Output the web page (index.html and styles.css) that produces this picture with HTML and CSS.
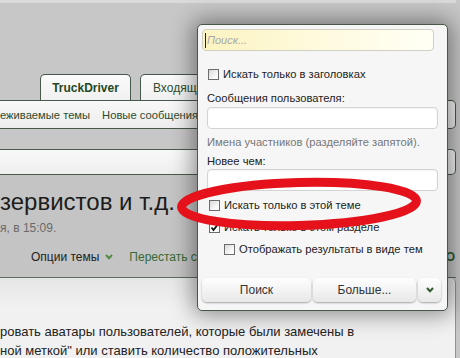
FILE: index.html
```html
<!DOCTYPE html>
<html lang="ru">
<head>
<meta charset="utf-8">
<link rel="stylesheet" href="styles.css">
</head>
<body>
<div class="page">
  <div class="topstrip"></div>
  <div class="tabs">
    <div class="tab active">TruckDriver</div>
    <div class="tab other">Входящие</div>
  </div>
  <div class="navbar">
    <span class="navlink">еживаемые темы</span>
    <span class="navlink">Новые сообщения</span>
  </div>
  <div class="crumbs"></div>
  <div class="titlebar">
    <h1 class="title">зервистов и т.д.</h1>
    <p class="meta">я, в 15:09.</p>
    <div class="options">
      <span class="opt">Опции темы</span>
      <svg class="chev-green" width="8" height="6" viewBox="0 0 8 6"><path d="M1 1 L4 4.2 L7 1" fill="none" stroke="#4f8a40" stroke-width="2"/></svg>
      <span class="link">Перестать следить</span>
      <span class="link edge">О</span>
    </div>
  </div>
  <div class="content">
    <p class="text">ровать аватары пользователей, которые были замечены в<br>ной меткой" или ставить количество положительных</p>
  </div>
</div>

<div class="popup">
  <div class="searchbox"><span class="caret"></span><span class="placeholder">Поиск...</span></div>
  <label class="row first"><span class="cb"></span>Искать только в заголовках</label>
  <div class="label">Сообщения пользователя:</div>
  <div class="field"></div>
  <div class="hint">Имена участников (разделяйте запятой).</div>
  <div class="label label2">Новее чем:</div>
  <div class="field field2"></div>
  <label class="row rows"><span class="cb"></span>Искать только в этой теме</label>
  <label class="row plain"><span class="cb checked"><svg width="9" height="9" viewBox="0 0 9 9"><path d="M1.5 4.5 L3.5 7 L7.8 1.5" fill="none" stroke="#111" stroke-width="1.8"/></svg></span>Искать только в этом разделе</label>
  <label class="row indent"><span class="cb"></span>Отображать результаты в виде тем</label>
  <div class="buttons">
    <span class="btn btn-search">Поиск</span>
    <span class="btn btn-more">Больше...</span>
    <span class="btn btn-toggle"><svg width="8" height="6" viewBox="0 0 8 6"><path d="M1 1 L4 4.2 L7 1" fill="none" stroke="#2f5a2f" stroke-width="2"/></svg></span>
  </div>
</div>

<svg class="mark" width="460" height="358" viewBox="0 0 460 358">
  <ellipse cx="299" cy="204" rx="117.5" ry="21.5" fill="none" stroke="#e5121b" stroke-width="9" transform="rotate(-1.5 299 204)"/>
</svg>
</body>
</html>
```

FILE: styles.css
```css
body {
  margin: 0;
  width: 460px;
  height: 358px;
  overflow: hidden;
  position: relative;
  background: #c7c7c7;
  font-family: "Liberation Sans", Arial, sans-serif;
}

.page {
  width: 456px;
}

.topstrip {
  height: 3px;
  background: #dadada;
}

.tabs {
  display: flex;
  gap: 9px;
  margin-top: 71px;
  height: 26px;
}

.tab {
  box-sizing: border-box;
  height: 26px;
  border: 1px solid #48584a;
  border-bottom: 0;
  border-radius: 5px 5px 0 0;
  background: linear-gradient(#fbfbfb, #f0f0f0);
  font-size: 12px;
  line-height: 26px;
  color: #2e4e2e;
}

.tab.active {
  width: 91px;
  margin-left: 40px;
  text-align: center;
  font-weight: bold;
  color: #24481f;
}

.tab.other {
  padding: 0 12px;
}

.navbar {
  box-sizing: border-box;
  height: 29px;
  border: 1px solid #48584a;
  border-left: 0;
  border-radius: 0 5px 5px 0;
  background: linear-gradient(#f8f8f8, #ededed);
  display: flex;
  align-items: center;
  gap: 12px;
  font-size: 11.2px;
  color: #2d4b2d;
}

.crumbs {
  box-sizing: border-box;
  margin-top: 20px;
  height: 26px;
  border: 1px solid #4b5b4b;
  border-left: 0;
  border-radius: 0 5px 5px 0;
  background: linear-gradient(#f9f9f9, #eeeeee);
}

.titlebar {
  height: 102px;
  border-bottom: 1px solid #5d6d5d;
  background: #c4c4c4;
  display: flex;
  flex-direction: column;
}

.title {
  margin: 12px 0 0;
  font-size: 24px;
  font-weight: normal;
  line-height: 30px;
  color: #1c1c1c;
}

.meta {
  margin: 3px 0 0;
  font-size: 12px;
  line-height: 16px;
  color: #6a6a6a;
}

.options {
  margin-top: 13px;
  display: flex;
  align-items: center;
  padding-left: 31px;
  font-size: 12px;
  line-height: 16px;
}

.opt {
  color: #222;
}

.chev-green {
  margin-left: 6px;
  margin-right: 16px;
}

.link {
  color: #356a35;
}

.edge {
  margin-left: auto;
  font-weight: bold;
  color: #2c5a2c;
  padding-right: 1px;
}

.content {
  height: 36px;
  border-right: 1px solid #8d978d;
  border-top-right-radius: 5px;
  background: linear-gradient(#e6e6e6, #f1f1f1 30px);
  padding-top: 44px;
  overflow: hidden;
}

.text {
  margin: 0;
  font-size: 13px;
  line-height: 19px;
  color: #222;
}

/* popup */
.popup {
  position: absolute;
  left: 197px;
  top: 24px;
  width: 251px;
  height: 287px;
  box-sizing: border-box;
  border: 1px solid #4a564a;
  border-radius: 5px;
  background: #f6f6f6;
  box-shadow: 0 0 22px 4px rgba(0, 0, 0, 0.42);
  padding: 4px 9px 8px 9px;
  display: flex;
  flex-direction: column;
  font-size: 11.2px;
  color: #333;
}

.searchbox {
  box-sizing: border-box;
  height: 22px;
  margin: 0 4px 0 -5px;
  border: 1px solid #cfcfc2;
  border-radius: 4px;
  background: linear-gradient(to right, #fbf3c0, #fffbe0 55%, #fffff6);
  display: flex;
  align-items: center;
  padding-left: 2px;
  gap: 1px;
}

.caret {
  width: 1px;
  height: 15px;
  background: #222;
}

.placeholder {
  font-style: italic;
  color: #a9a9a9;
  font-size: 11px;
}

.row {
  height: 22px;
  display: flex;
  align-items: center;
  gap: 4px;
  color: #222;
}

.row.first {
  margin-top: 12px;
  padding-left: 1px;
}

.row.rows {
  margin-top: 3px;
  padding-left: 2px;
}

.row.plain {
  padding-left: 2px;
}

.row.indent {
  padding-left: 17px;
}

.cb {
  box-sizing: border-box;
  width: 11px;
  height: 11px;
  border: 1px solid #6c6c6c;
  background: linear-gradient(135deg, #d8d8d8, #fafafa 70%);
  display: flex;
  align-items: center;
  justify-content: center;
}

.cb.checked {
  background: #fff;
}

.label {
  margin-top: 6px;
  line-height: 14px;
  color: #222;
}

.label2 {
  margin-top: 5px;
}

.field {
  box-sizing: border-box;
  height: 22px;
  margin-top: 2px;
  border: 1px solid #d3d3d3;
  border-radius: 4px;
  background: #fff;
  box-shadow: inset 0 1px 2px rgba(0, 0, 0, 0.05);
}

.field2 {
  margin-top: 1px;
}

.hint {
  margin-top: 6px;
  line-height: 14px;
  color: #777;
}

.buttons {
  margin: auto -5px 0 -5px;
  display: flex;
  gap: 2px;
  height: 24px;
}

.btn {
  box-sizing: border-box;
  height: 24px;
  border-radius: 5px;
  background: linear-gradient(#fefefe, #e8e8e8);
  box-shadow: 0 1px 2px rgba(0, 0, 0, 0.35);
  font-size: 12px;
  line-height: 24px;
  text-align: center;
  color: #333;
}

.btn-search {
  width: 109px;
}

.btn-more {
  width: 103px;
}

.btn-toggle {
  width: 23px;
  display: flex;
  align-items: center;
  justify-content: center;
}

.mark {
  position: absolute;
  left: 0;
  top: 0;
  pointer-events: none;
}
```
